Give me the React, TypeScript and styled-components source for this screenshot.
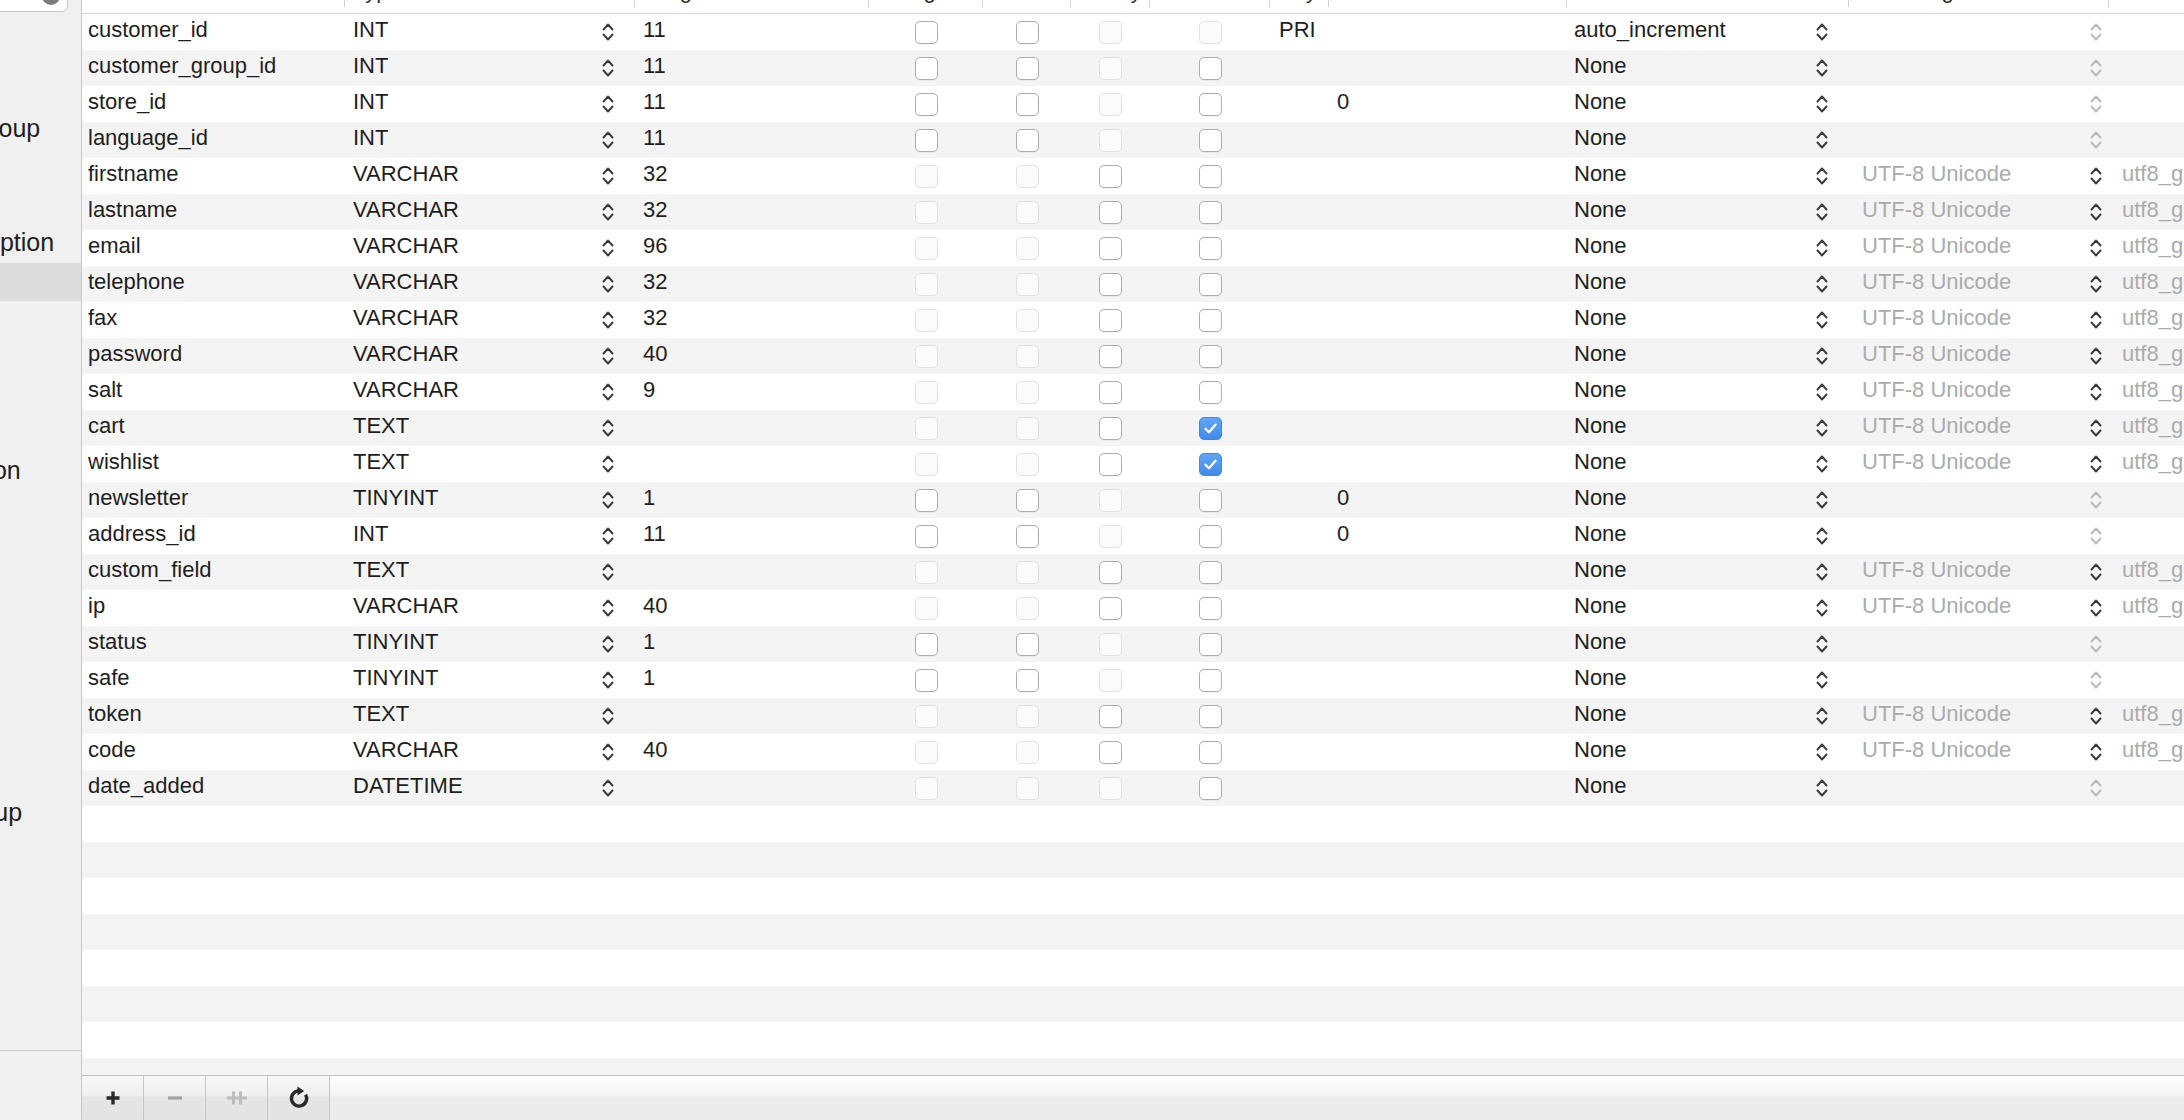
import React from 'react';
import styled, { createGlobalStyle } from 'styled-components';

const GlobalStyle = createGlobalStyle`
  html, body {
    margin: 0;
    padding: 0;
    background: #ffffff;
    overflow: hidden;
  }
  body {
    font-family: "Liberation Sans", Arial, sans-serif;
    color: #1f1f1f;
  }
`;

type Check = 'on' | 'off' | 'dis';

interface Column {
  label: string;
  width: number;
  center?: boolean;
  pad: number;
}

interface FieldRow {
  name: string;
  type: string;
  length: string;
  unsigned: Check;
  zerofill: Check;
  binary: Check;
  allowNull: Check;
  key?: string;
  def?: string;
  extra: string;
  text: boolean;
}

const COLUMNS: Column[] = [
  { label: 'Field', width: 263, pad: 6 },
  { label: 'Type', width: 290, pad: 8 },
  { label: 'Length', width: 234, pad: 8 },
  { label: 'Unsigned', width: 114, center: true, pad: 0 },
  { label: 'Zerofill', width: 88, center: true, pad: 0 },
  { label: 'Binary', width: 79, center: true, pad: 0 },
  { label: 'Allow Null', width: 120, center: true, pad: 0 },
  { label: 'Key', width: 59, pad: 9 },
  { label: 'Default', width: 238, pad: 8 },
  { label: 'Extra', width: 282, pad: 7 },
  { label: 'Encoding', width: 260, pad: 13 },
  { label: 'Collation', width: 260, pad: 13 },
];

const GRID = COLUMNS.map((c) => `${c.width}px`).join(' ');

// checkbox states per kind of column type
const num = (name: string, type: string, length: string, extra: Partial<FieldRow> = {}): FieldRow => ({
  name, type, length,
  unsigned: 'off', zerofill: 'off', binary: 'dis', allowNull: 'off',
  extra: 'None', text: false, ...extra,
});

const str = (name: string, type: string, length: string, extra: Partial<FieldRow> = {}): FieldRow => ({
  name, type, length,
  unsigned: 'dis', zerofill: 'dis', binary: 'off', allowNull: 'off',
  extra: 'None', text: true, ...extra,
});

const FIELDS: FieldRow[] = [
  num('customer_id', 'INT', '11', { key: 'PRI', extra: 'auto_increment', allowNull: 'dis' }),
  num('customer_group_id', 'INT', '11'),
  num('store_id', 'INT', '11', { def: '0' }),
  num('language_id', 'INT', '11'),
  str('firstname', 'VARCHAR', '32'),
  str('lastname', 'VARCHAR', '32'),
  str('email', 'VARCHAR', '96'),
  str('telephone', 'VARCHAR', '32'),
  str('fax', 'VARCHAR', '32'),
  str('password', 'VARCHAR', '40'),
  str('salt', 'VARCHAR', '9'),
  str('cart', 'TEXT', '', { allowNull: 'on' }),
  str('wishlist', 'TEXT', '', { allowNull: 'on' }),
  num('newsletter', 'TINYINT', '1', { def: '0' }),
  num('address_id', 'INT', '11', { def: '0' }),
  str('custom_field', 'TEXT', ''),
  str('ip', 'VARCHAR', '40'),
  num('status', 'TINYINT', '1'),
  num('safe', 'TINYINT', '1'),
  str('token', 'TEXT', ''),
  str('code', 'VARCHAR', '40'),
  {
    name: 'date_added', type: 'DATETIME', length: '',
    unsigned: 'dis', zerofill: 'dis', binary: 'dis', allowNull: 'off',
    extra: 'None', text: false,
  },
];

const TABLES = [
  'oc_coupon_product',
  'oc_currency',
  'oc_custom_field',
  'oc_custom_field_customer_group',
  'oc_custom_field_description',
  'oc_custom_field_value',
  'oc_custom_field_value_description',
  'oc_customer',
  'oc_customer_activity',
  'oc_customer_affiliate',
  'oc_customer_approval',
  'oc_customer_group',
  'oc_customer_group_description',
  'oc_customer_history',
  'oc_customer_ip',
  'oc_customer_login',
  'oc_customer_online',
  'oc_customer_reward',
  'oc_customer_search',
  'oc_customer_transaction',
  'oc_customer_wishlist',
  'oc_customer_transaction_group',
  'oc_download',
  'oc_download_description',
  'oc_download_report',
  'oc_event',
  'oc_extension',
  'oc_extension_install',
];

const SELECTED_TABLE = 'oc_customer';
const EMPTY_ROWS = 8;

/* ---------- icons ---------- */

const Stepper: React.FC<{ muted?: boolean }> = ({ muted }) => (
  <svg width="12" height="22" viewBox="0 0 12 22" fill="none">
    <path
      d="M1.5 8.5 L6 3.5 L10.5 8.5 M1.5 13.5 L6 18.5 L10.5 13.5"
      stroke={muted ? '#b9b9b9' : '#3a3a3a'}
      strokeWidth="1.9"
      strokeLinecap="round"
      strokeLinejoin="round"
    />
  </svg>
);

const CheckMark = () => (
  <svg width="23" height="23" viewBox="0 0 23 23" fill="none">
    <path d="M6 11.8 L9.8 15.6 L17 7.4" stroke="#ffffff" strokeWidth="2.6" strokeLinecap="round" strokeLinejoin="round" />
  </svg>
);

const PlusIcon = () => (
  <svg width="16" height="16" viewBox="0 0 16 16">
    <path d="M8 1.5 V14.5 M1.5 8 H14.5" stroke="#2b2b2b" strokeWidth="3.4" />
  </svg>
);

const MinusIcon = () => (
  <svg width="16" height="16" viewBox="0 0 16 16">
    <path d="M1 8 H15" stroke="#a3a3a3" strokeWidth="3.2" />
  </svg>
);

const DuplicateIcon = () => (
  <svg width="22" height="16" viewBox="0 0 22 16">
    <path d="M1 8 H21 M7.5 1.5 V14.5 M14.5 1.5 V14.5" stroke="#bdbdbd" strokeWidth="3" />
  </svg>
);

const RefreshIcon = () => (
  <svg width="24" height="24" viewBox="0 0 24 24" fill="none">
    <path d="M18.6 8.6 A7.6 7.6 0 1 1 11.5 4.9" stroke="#2a2a2a" strokeWidth="3.4" />
    <path d="M10.5 0.4 L17.2 4.9 L10.5 9.4 Z" fill="#2a2a2a" />
  </svg>
);

/* ---------- layout ---------- */

const Window = styled.div`
  display: flex;
  width: 2184px;
  height: 1120px;
  overflow: hidden;
`;

const Sidebar = styled.aside`
  flex: 0 0 81px;
  display: flex;
  flex-direction: column;
  background: #f1f0f0;
  border-right: 1px solid #c8c8c8;
  overflow: hidden;
`;

// the left part of the source list lies outside the captured area
const SidebarInner = styled.div`
  display: flex;
  flex-direction: column;
  flex: 1;
  min-height: 0;
  width: 429px;
  margin-left: -348px;
`;

const SearchArea = styled.div`
  flex: 0 0 13px;
  min-height: 0;
  display: flex;
  align-items: flex-end;
  padding: 0 13px 1px 8px;
  box-sizing: border-box;
`;

const SearchField = styled.div`
  flex: 1;
  height: 30px;
  flex-shrink: 0;
  display: flex;
  justify-content: flex-end;
  align-items: flex-end;
  box-sizing: border-box;
  background: #ffffff;
  border: 1px solid #c6c6c6;
  border-radius: 6px;
`;

const ClearButton = styled.span`
  width: 18px;
  height: 18px;
  margin: 0 7px 6px 0;
  border-radius: 50%;
  background: #7d7d7d;
`;

const TableList = styled.div`
  flex: 1;
  min-height: 0;
  overflow: hidden;
`;

const TableListScroll = styled.div`
  margin-top: -16px;
`;

const TableItem = styled.div<{ $selected?: boolean }>`
  height: 38px;
  display: flex;
  align-items: center;
  padding-left: 13px;
  white-space: nowrap;
  background: ${({ $selected }) => ($selected ? '#dcdcdc' : 'transparent')};
`;

const TableName = styled.span`
  font-size: 25px;
  line-height: 25px;
  padding-bottom: 3px;
  color: #1e1e1e;
`;

const SidebarFooter = styled.div`
  flex: 0 0 69px;
  border-top: 1px solid #cdcdcd;
  background: #f1f0f0;
`;

const Main = styled.main`
  flex: 1;
  min-width: 0;
  display: flex;
  flex-direction: column;
  overflow: hidden;
`;

const HeaderRow = styled.div`
  display: grid;
  grid-template-columns: ${GRID};
  height: 13px;
  border-bottom: 1px solid #d3d3d3;
  flex: 0 0 auto;
`;

const HeaderCell = styled.div<{ $center?: boolean; $pad: number }>`
  overflow: hidden;
  padding-left: ${({ $pad }) => $pad}px;
  text-align: ${({ $center }) => ($center ? 'center' : 'left')};
  background: linear-gradient(#d4d4d4, #d4d4d4) right top / 1px 7px no-repeat;
`;

const HeaderLabel = styled.span`
  display: block;
  margin-top: -20px;
  font-size: 22px;
  line-height: 22px;
  color: #2e2e2e;
  white-space: nowrap;
`;

const Body = styled.div`
  flex: 1;
  min-height: 0;
  overflow: hidden;
`;

const Row = styled.div<{ $alt: boolean }>`
  display: grid;
  grid-template-columns: ${GRID};
  height: 36px;
  background: ${({ $alt }) => ($alt ? '#f4f4f4' : '#ffffff')};
`;

const Cell = styled.div<{ $pad?: number }>`
  display: flex;
  align-items: center;
  padding-left: ${({ $pad = 0 }) => $pad}px;
  overflow: hidden;
  white-space: nowrap;
`;

const CheckCell = styled.div`
  display: flex;
  align-items: center;
  justify-content: center;
`;

const SelectCell = styled.div<{ $pl: number; $pr: number }>`
  display: flex;
  align-items: center;
  justify-content: space-between;
  padding: 0 ${({ $pr }) => $pr}px 0 ${({ $pl }) => $pl}px;
  white-space: nowrap;
`;

const Text = styled.span<{ $muted?: boolean }>`
  font-size: 22px;
  line-height: 22px;
  padding-bottom: 4px;
  color: ${({ $muted }) => ($muted ? '#ababab' : '#1e1e1e')};
`;

const Box = styled.span<{ $state: Check }>`
  width: 23px;
  height: 23px;
  box-sizing: border-box;
  border-radius: 5px;
  display: flex;
  align-items: center;
  justify-content: center;
  ${({ $state }) =>
    $state === 'on'
      ? `background: linear-gradient(#62a5f6, #4189ec); border: 1px solid #3f86e6;`
      : $state === 'dis'
      ? `background: #fbfbfb; border: 1px solid #e1e1e1;`
      : `background: #ffffff; border: 1px solid #acacac; box-shadow: 0 1px 0 rgba(0,0,0,0.04);`}
`;

const BottomBar = styled.div`
  flex: 0 0 44px;
  display: flex;
  border-top: 1px solid #c3c3c3;
  background: linear-gradient(#fdfdfd 0%, #f4f4f4 46%, #ececec 47%, #ebebeb 100%);
`;

const BarButton = styled.button`
  width: 62px;
  height: 100%;
  padding: 0;
  display: flex;
  align-items: center;
  justify-content: center;
  border: none;
  border-right: 1px solid #c6c6c6;
  background: linear-gradient(#f7f7f7 0%, #efefef 46%, #e5e5e5 47%, #e4e4e4 100%);
`;

const Checkbox: React.FC<{ state: Check }> = ({ state }) => (
  <CheckCell>
    <Box $state={state}>{state === 'on' && <CheckMark />}</Box>
  </CheckCell>
);

const FieldLine: React.FC<{ f: FieldRow; alt: boolean }> = ({ f, alt }) => (
  <Row $alt={alt}>
    <Cell $pad={6}><Text>{f.name}</Text></Cell>
    <SelectCell $pl={8} $pr={21}>
      <Text>{f.type}</Text>
      <Stepper />
    </SelectCell>
    <Cell $pad={8}><Text>{f.length}</Text></Cell>
    <Checkbox state={f.unsigned} />
    <Checkbox state={f.zerofill} />
    <Checkbox state={f.binary} />
    <Checkbox state={f.allowNull} />
    <Cell $pad={9}><Text>{f.key ?? ''}</Text></Cell>
    <Cell $pad={8}><Text>{f.def ?? ''}</Text></Cell>
    <SelectCell $pl={7} $pr={21}>
      <Text>{f.extra}</Text>
      <Stepper />
    </SelectCell>
    <SelectCell $pl={13} $pr={7}>
      <Text $muted>{f.text ? 'UTF-8 Unicode' : ''}</Text>
      <Stepper muted={!f.text} />
    </SelectCell>
    <Cell $pad={13}><Text $muted>{f.text ? 'utf8_general_ci' : ''}</Text></Cell>
  </Row>
);

export default function App() {
  return (
    <>
      <GlobalStyle />
      <Window>
        <Sidebar>
          <SidebarInner>
            <SearchArea>
              <SearchField>
                <ClearButton />
              </SearchField>
            </SearchArea>
            <TableList>
              <TableListScroll>
                {TABLES.map((t) => (
                  <TableItem key={t} $selected={t === SELECTED_TABLE}>
                    <TableName>{t}</TableName>
                  </TableItem>
                ))}
              </TableListScroll>
            </TableList>
          </SidebarInner>
          <SidebarFooter />
        </Sidebar>

        <Main>
          <HeaderRow>
            {COLUMNS.map((c) => (
              <HeaderCell key={c.label} $center={c.center} $pad={c.pad}>
                <HeaderLabel>{c.label}</HeaderLabel>
              </HeaderCell>
            ))}
          </HeaderRow>

          <Body>
            {FIELDS.map((f, i) => (
              <FieldLine key={f.name} f={f} alt={i % 2 === 1} />
            ))}
            {Array.from({ length: EMPTY_ROWS }, (_, i) => (
              <Row key={`empty-${i}`} $alt={(FIELDS.length + i) % 2 === 1} />
            ))}
          </Body>

          <BottomBar>
            <BarButton><PlusIcon /></BarButton>
            <BarButton><MinusIcon /></BarButton>
            <BarButton><DuplicateIcon /></BarButton>
            <BarButton><RefreshIcon /></BarButton>
          </BottomBar>
        </Main>
      </Window>
    </>
  );
}
